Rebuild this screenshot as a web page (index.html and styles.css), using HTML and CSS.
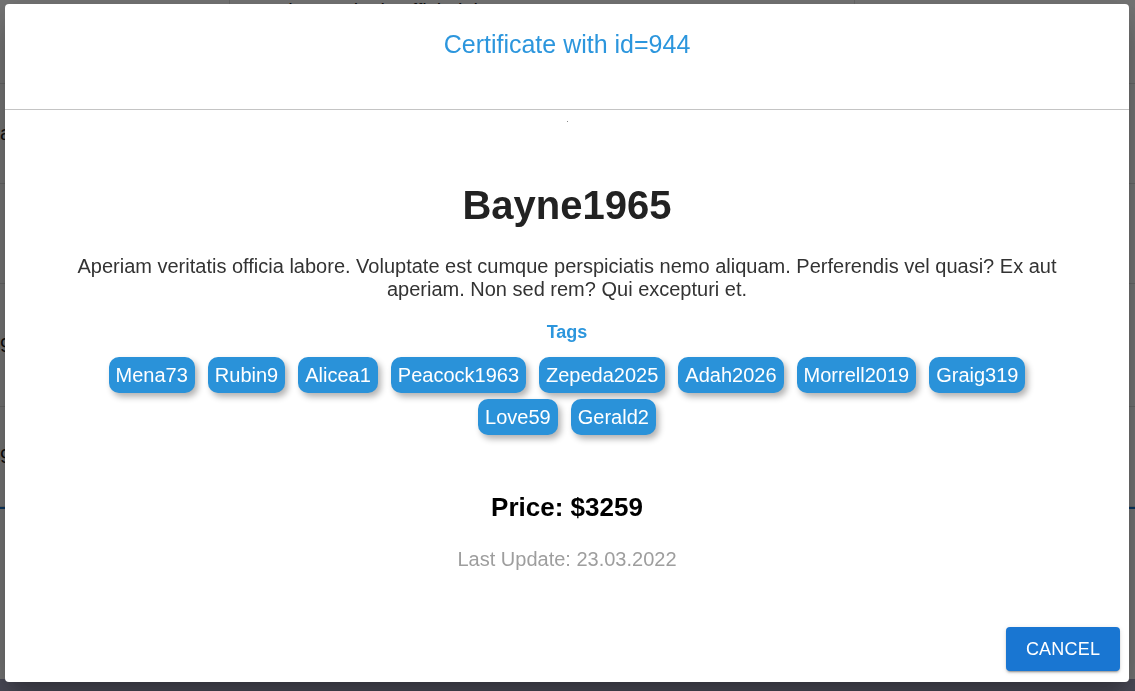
FILE: index.html
```html
<!DOCTYPE html>
<html lang="en">
<head>
<meta charset="utf-8">
<title>Certificate with id=944</title>
<link rel="stylesheet" href="styles.css">
</head>
<body>
<div class="page">
  <div class="table">
    <div class="row row-head">
      <div class="cell c1"></div>
      <div class="cell c2">Aperiam veritatis officia labore</div>
      <div class="cell c3"></div>
    </div>
    <div class="row r1"><div class="cell c1">a</div><div class="cell c2"></div><div class="cell c3"></div></div>
    <div class="row r2"><div class="cell c1"></div><div class="cell c2"></div><div class="cell c3"></div></div>
    <div class="row r3"><div class="cell c1">9</div><div class="cell c2"></div><div class="cell c3"></div></div>
    <div class="row r4"><div class="cell c1">9</div><div class="cell c2"></div><div class="cell c3"></div></div>
  </div>
  <div class="bar"></div>
  <div class="footer"></div>
</div>
<div class="overlay"></div>
<div class="dialog" role="dialog">
  <div class="dialog-header">
    <h2 class="dialog-title">Certificate with id=944</h2>
  </div>
  <div class="dialog-body">
    <span class="dot"></span>
    <h1 class="cert-name">Bayne1965</h1>
    <p class="cert-desc">Aperiam veritatis officia labore. Voluptate est cumque perspiciatis nemo aliquam. Perferendis vel quasi? Ex aut aperiam. Non sed rem? Qui excepturi et.</p>
    <div class="tags-label">Tags</div>
    <div class="tags">
      <span class="tag">Mena73</span>
      <span class="tag">Rubin9</span>
      <span class="tag">Alicea1</span>
      <span class="tag">Peacock1963</span>
      <span class="tag">Zepeda2025</span>
      <span class="tag">Adah2026</span>
      <span class="tag">Morrell2019</span>
      <span class="tag">Graig319</span>
      <span class="tag">Love59</span>
      <span class="tag">Gerald2</span>
    </div>
    <div class="price">Price: $3259</div>
    <div class="updated">Last Update: 23.03.2022</div>
  </div>
  <div class="dialog-actions">
    <button class="btn-cancel">CANCEL</button>
  </div>
</div>
</body>
</html>
```

FILE: styles.css
```css
* { box-sizing: border-box; }
html, body { margin: 0; padding: 0; }
body {
  width: 1135px;
  height: 691px;
  overflow: hidden;
  font-family: "Liberation Sans", Arial, sans-serif;
  background: #ffffff;
}
.page {
  height: 691px;
  display: flex;
  flex-direction: column;
  background: #ffffff;
}
.table { display: flex; flex-direction: column; }
.row {
  display: flex;
  border-bottom: 1px solid #e0e0e0;
}
.row-head { height: 84px; }
.r1 { height: 100px; }
.r2 { height: 100px; }
.r3 { height: 123px; }
.r4 { height: 100px; }
.cell {
  font-size: 20px;
  color: #1a1a1a;
  padding: 0;
  display: flex;
  align-items: center;
  overflow: hidden;
  white-space: nowrap;
}
.row-head .cell { align-items: flex-start; }
.c1 { width: 230px; border-right: 1px solid #e0e0e0; }
.c2 { width: 625px; border-right: 1px solid #e0e0e0; padding-left: 16px; }
.c3 { flex: 1; }
.bar { height: 2px; background: #1976d2; }
.footer { margin-top: auto; height: 12px; background: #a3a3bf; }

.overlay {
  position: fixed;
  inset: 0;
  background: rgba(0, 0, 0, 0.545);
}

.dialog {
  position: fixed;
  top: 4px;
  left: 5px;
  width: 1124px;
  height: 678px;
  background: #ffffff;
  border-radius: 4px;
  display: flex;
  flex-direction: column;
  box-shadow: 0 11px 15px -7px rgba(0,0,0,0.2), 0 24px 38px 3px rgba(0,0,0,0.14), 0 9px 46px 8px rgba(0,0,0,0.12);
}
.dialog-header {
  height: 106px;
  border-bottom: 1px solid #c4c4c4;
  padding-top: 26px;
  text-align: center;
}
.dialog-title {
  margin: 0;
  font-size: 25px;
  font-weight: normal;
  line-height: 29px;
  color: #2c96dd;
}
.dialog-body {
  display: flex;
  flex-direction: column;
  align-items: center;
  padding: 0 48px;
  text-align: center;
}
.dot {
  display: block;
  width: 1px;
  height: 1px;
  background: #8a8a8a;
  margin-top: 11px;
}
.cert-name {
  margin: 60px 0 0;
  font-size: 40px;
  line-height: 46px;
  font-weight: bold;
  color: #222222;
}
.cert-desc {
  margin: 27px 0 0;
  font-size: 20px;
  line-height: 23px;
  color: #333333;
}
.tags-label {
  margin-top: 21px;
  font-size: 18px;
  line-height: 21px;
  font-weight: bold;
  color: #2c96dd;
}
.tags {
  margin-top: 11px;
  display: flex;
  flex-wrap: wrap;
  justify-content: center;
  max-width: 940px;
}
.tag {
  margin: 3px 6.5px;
  height: 36px;
  padding: 0 7px;
  display: flex;
  align-items: center;
  font-size: 20px;
  color: #ffffff;
  background: #2a92d9;
  border-radius: 10px;
  box-shadow: 3px 4px 6px rgba(0, 0, 0, 0.3);
}
.price {
  margin-top: 54px;
  font-size: 26px;
  line-height: 30px;
  font-weight: bold;
  color: #000000;
}
.updated {
  margin-top: 26px;
  font-size: 20px;
  line-height: 23px;
  color: #9e9e9e;
}
.dialog-actions {
  margin-top: auto;
  display: flex;
  justify-content: flex-end;
  padding: 0 9px 11px 0;
}
.btn-cancel {
  width: 114px;
  height: 44px;
  border: none;
  border-radius: 4px;
  background: #1976d2;
  color: #ffffff;
  font-family: "Liberation Sans", Arial, sans-serif;
  font-size: 18px;
  letter-spacing: 0.2px;
  box-shadow: 0 3px 1px -2px rgba(0,0,0,0.2), 0 2px 2px 0 rgba(0,0,0,0.14), 0 1px 5px 0 rgba(0,0,0,0.12);
  cursor: pointer;
}
```
